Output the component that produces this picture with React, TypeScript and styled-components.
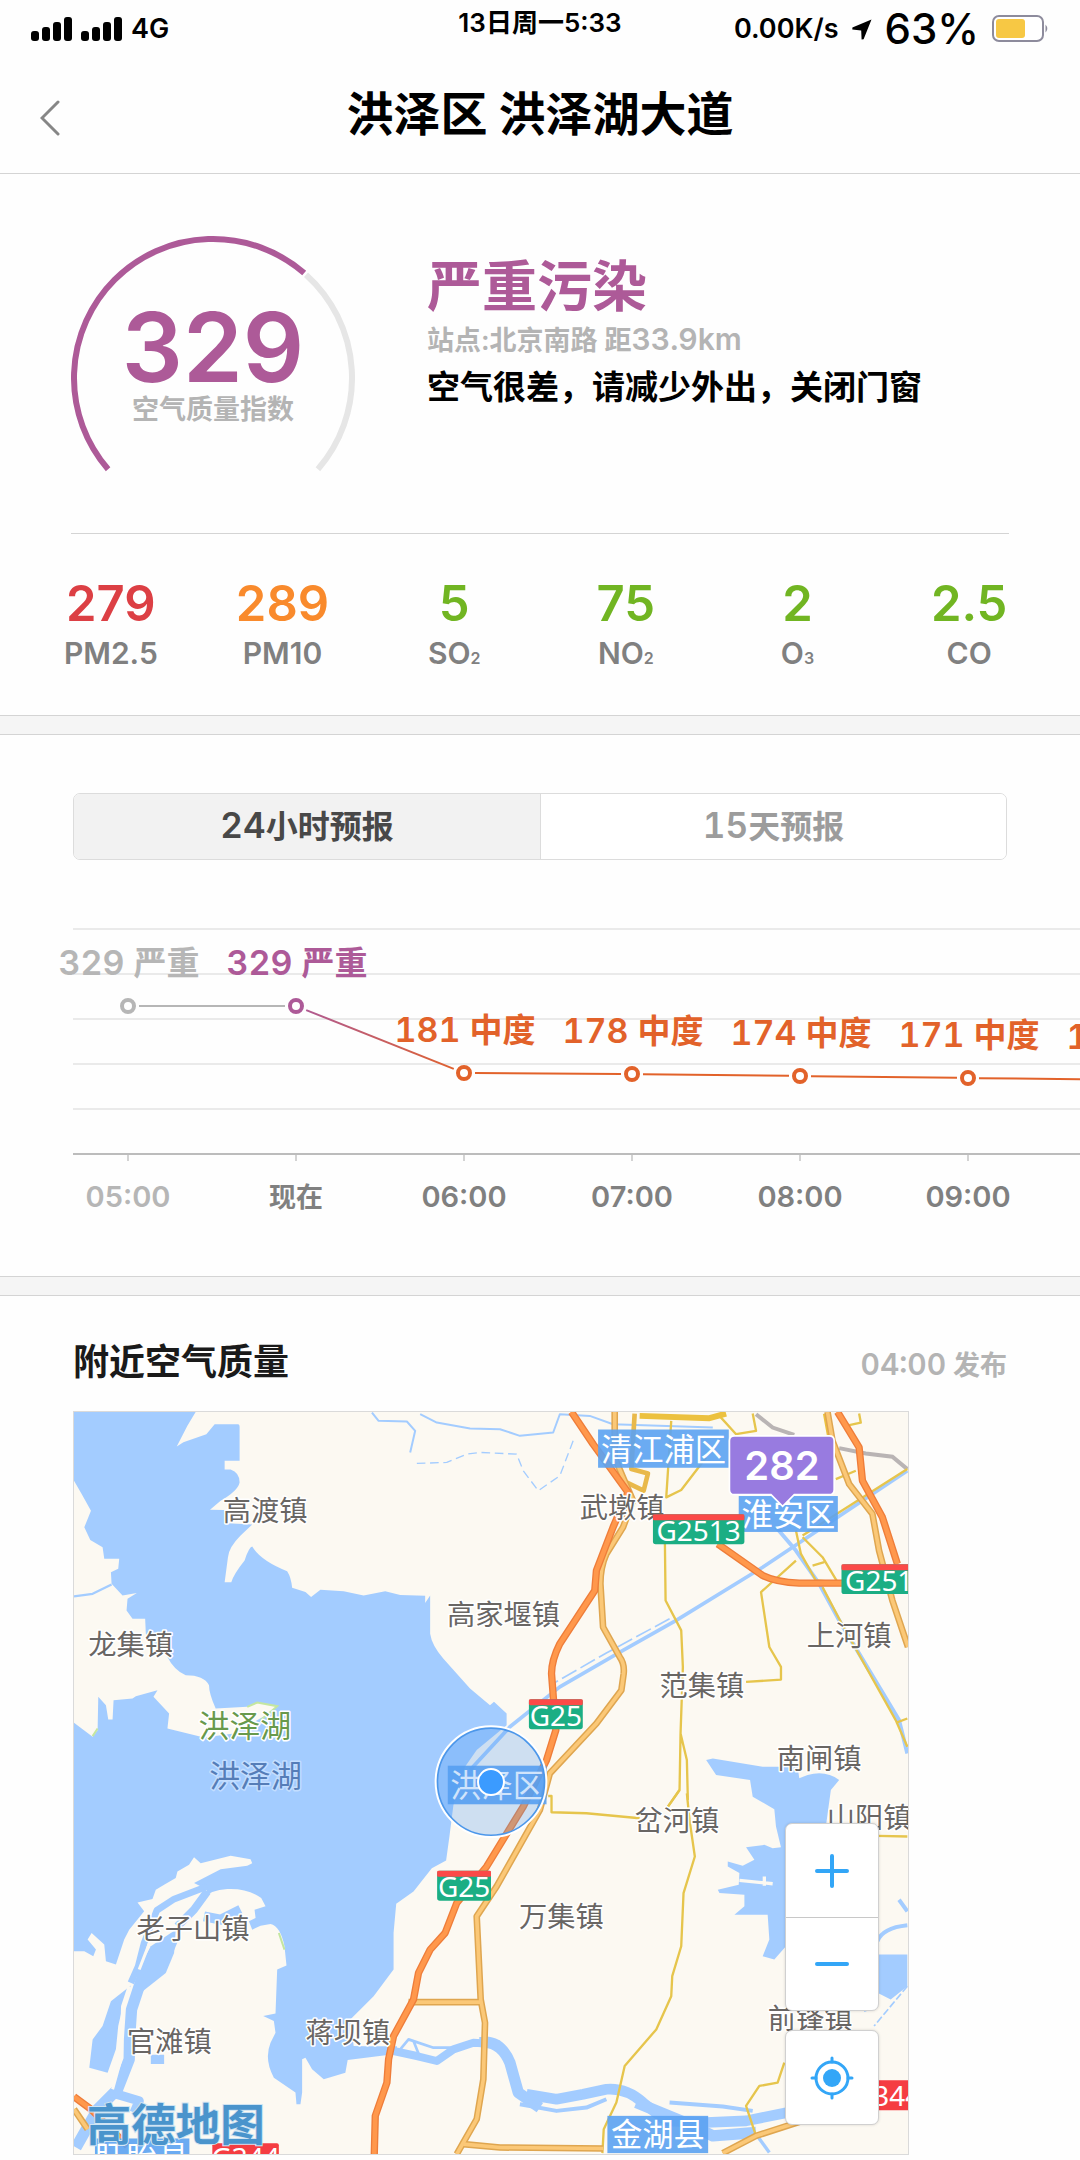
import React, { useState } from "react";
import styled, { createGlobalStyle } from "styled-components";

const FONT = `Inter, "Noto Sans CJK SC", sans-serif`;
const MAP_FONT = `"Noto Sans", "Noto Sans CJK SC", sans-serif`;

const color = {
  purple: "#ad5a98",
  red: "#dc3f44",
  amber: "#f98a2c",
  green: "#71b522",
  orange: "#e2622a",
  line: "#d4d4d4",
  muted: "#b4b4b4",
  label: "#808080",
  water: "#a3ccff",
  land: "#fcf9f2",
  road: "#e6c54c",
  sky: "#33a6f7",
};

const GlobalStyle = createGlobalStyle`
  *, *::before, *::after { box-sizing: border-box; }
  body { margin: 0; background: #fefefe; color: #000; font-family: ${FONT}; }
  button { font: inherit; padding: 0; border: 0; background: none; cursor: pointer; }
  h1, h2, p, dl, dd { margin: 0; }
`;

const Page = styled.div`
  overflow: hidden;
  padding-bottom: 5px;
`;

const StatusBar = styled.div`
  display: grid;
  grid-template-columns: 1fr auto 1fr;
  align-items: center;
  height: 58px;
  padding: 0 31px;
  font-size: 27px;
  line-height: 32px;
  font-weight: 600;
`;

const StatusGroup = styled.div<{ $end?: boolean }>`
  display: flex;
  align-items: center;
  justify-content: ${(p) => (p.$end ? "flex-end" : "flex-start")};
  gap: ${(p) => (p.$end ? 13 : 9)}px;
`;

const StatusTime = styled.time`
  align-self: start;
  padding-top: 7px;
  font-size: 26px;
`;

const BatteryLevel = styled.span`
  font-size: 42px;
  font-weight: 500;
`;

const Header = styled.header`
  display: grid;
  grid-template-columns: 100px 1fr 100px;
  align-items: center;
  height: 116px;
  padding-bottom: 3px;
  border-bottom: 1px solid ${color.line};
`;

const BackButton = styled.button`
  display: flex;
  align-items: center;
  height: 100%;
  padding: 8px 0 0 40px;
`;

const Title = styled.h1`
  text-align: center;
  font-size: 47px;
  line-height: 56px;
  font-weight: 700;
`;

const Hero = styled.section`
  display: flex;
  gap: 72px;
  margin: 0 71px;
  padding: 61px 0;
  border-bottom: 1px solid ${color.line};
`;

const Gauge = styled.div`
  position: relative;
  flex: none;
  width: 284px;
  height: 237px;
`;

const GaugeText = styled.div`
  position: absolute;
  inset: 0;
  padding-top: 63px;
  text-align: center;
`;

const GaugeValue = styled.div`
  font-size: 96px;
  line-height: 98px;
  font-weight: 600;
  color: ${color.purple};
`;

const GaugeCaption = styled.div`
  font-size: 27px;
  line-height: 28px;
  font-weight: 600;
  color: ${color.muted};
`;

const Info = styled.div`
  padding-top: 21px;
`;

const Level = styled.h2`
  font-size: 55px;
  line-height: 60px;
  font-weight: 700;
  color: ${color.purple};
`;

const Station = styled.p`
  font-size: 27px;
  line-height: 50px;
  font-weight: 600;
  color: ${color.muted};
`;

const Figures = styled.span<{ $size: number }>`
  font-size: ${(p) => p.$size}px;
  line-height: 32px;
  font-variant-numeric: tabular-nums;
`;

const Advice = styled.p`
  font-size: 33px;
  line-height: 42px;
  font-weight: 700;
`;

const Pollutants = styled.dl`
  display: grid;
  grid-template-columns: repeat(6, 1fr);
  padding: 40px 25px 43px;
  text-align: center;
`;

const Pollutant = styled.div`
  display: flex;
  flex-direction: column-reverse;
`;

const PollutantName = styled.dt`
  font-size: 30px;
  line-height: 38px;
  font-weight: 600;
  color: ${color.label};

  sub {
    font-size: 16px;
    line-height: 16px;
    vertical-align: baseline;
  }
`;

const PollutantValue = styled.dd<{ $color: string }>`
  font-size: 49px;
  line-height: 60px;
  font-weight: 600;
  color: ${(p) => p.$color};
`;

const Band = styled.div`
  height: 20px;
  background: #f5f5f5;
  border-top: 1px solid ${color.line};
  border-bottom: 1px solid ${color.line};
`;

const Tabs = styled.div`
  display: grid;
  grid-template-columns: 1fr 1fr;
  height: 67px;
  margin: 58px 73px 0;
  border: 1px solid #dcdcdc;
  border-radius: 7px;
  overflow: hidden;
`;

const Tab = styled.button<{ $active: boolean }>`
  padding-bottom: 6px;
  font-size: 32px;
  font-weight: 600;
  color: ${(p) => (p.$active ? "#484848" : "#9c9c9c")};
  background: ${(p) => (p.$active ? "#f2f2f2" : "#fff")};

  & + & {
    border-left: 1px solid #dcdcdc;
  }
`;

const ChartScroller = styled.div`
  height: 416px;
  overflow: hidden;

  svg {
    display: block;
  }
`;

const ChartValue = styled.text`
  font-variant-numeric: tabular-nums;
`;

const Nearby = styled.section`
  padding: 36px 73px 0;
`;

const NearbyHead = styled.div`
  display: flex;
  align-items: baseline;
  justify-content: space-between;
  margin-bottom: 15px;
  line-height: 60px;
`;

const NearbyTitle = styled.h2`
  font-size: 36px;
  font-weight: 700;
  color: #1a1a1a;
`;

const Published = styled.span`
  font-size: 27px;
  font-weight: 600;
  color: ${color.muted};
`;

const MapBox = styled.div`
  position: relative;
  width: 100%;
  max-width: 836px;
  height: 744px;
  border: 1px solid #dadada;

  > svg {
    display: block;
    width: 100%;
    height: 100%;
  }
`;

const MapControls = styled.div`
  position: absolute;
  right: 29px;
  bottom: 29px;
  display: grid;
  gap: 19px;
`;

const ControlGroup = styled.div`
  display: grid;
  background: #fff;
  border: 1px solid #d0d0d0;
  border-radius: 7px;
  box-shadow: 0 0 3px rgba(0, 0, 0, 0.15);
`;

const ControlButton = styled.button`
  display: grid;
  place-items: center;
  width: 92px;
  height: 93px;

  & + & {
    border-top: 1px solid #c8c8c8;
  }
`;

function SignalBars() {
  return (
    <svg width="41" height="25" viewBox="0 0 41 25" aria-hidden="true">
      <rect x="0" y="14" width="8" height="10" rx="3" />
      <rect x="11" y="10" width="8" height="14" rx="3" />
      <rect x="22" y="5" width="8" height="19" rx="3" />
      <rect x="33" y="0" width="8" height="24" rx="3" />
    </svg>
  );
}

function LocationArrow() {
  return (
    <svg width="20" height="21" viewBox="0 0 20 21" aria-hidden="true">
      <path d="M19.5 .5 11.6 20.2 9.6 20.4 9.2 11.4 .3 10.4 .4 8.6Z" />
    </svg>
  );
}

function Battery() {
  return (
    <svg width="57" height="28" viewBox="0 0 57 28" aria-hidden="true">
      <rect x="1" y="1" width="50" height="25" rx="6" fill="#fff" stroke="#8d8b9c" strokeWidth="2" />
      <rect x="4" y="4" width="29" height="19" rx="3" fill="#f7c844" />
      <path d="M53.5 9.500 Q57 13.500 53.500 17.500Z" fill="#8d8b9c" />
    </svg>
  );
}

function GaugeArc() {
  const cx = 142;
  const cy = 143;
  const r = 139;
  const at = (deg: number) => {
    const a = (deg * Math.PI) / 180;
    return `${cx + r * Math.cos(a)} ${cy + r * Math.sin(a)}`;
  };
  return (
    <svg width="284" height="237" viewBox="0 0 284 237" fill="none" strokeWidth="6" aria-hidden="true">
      <path d={`M${at(139)} A${r} ${r} 0 0 1 ${at(311)}`} stroke={color.purple} />
      <path d={`M${at(312)} A${r} ${r} 0 0 1 ${at(401)}`} stroke="#e6e6e6" />
    </svg>
  );
}

const pollutants = [
  { name: "PM2.5", value: "279", tint: color.red },
  { name: "PM10", value: "289", tint: color.amber },
  { name: "SO", sub: "2", value: "5", tint: color.green },
  { name: "NO", sub: "2", value: "75", tint: color.green },
  { name: "O", sub: "3", value: "2", tint: color.green },
  { name: "CO", value: "2.5", tint: color.green },
];

const hours = [
  { time: "05:00", aqi: 329, level: "严重", y: 146, tint: "#b6b6b6", past: true },
  { time: "现在", aqi: 329, level: "严重", y: 146, tint: color.purple },
  { time: "06:00", aqi: 181, level: "中度", y: 213, tint: color.orange },
  { time: "07:00", aqi: 178, level: "中度", y: 214, tint: color.orange },
  { time: "08:00", aqi: 174, level: "中度", y: 216, tint: color.orange },
  { time: "09:00", aqi: 171, level: "中度", y: 218, tint: color.orange },
  { time: "10:00", aqi: 168, level: "中度", y: 220, tint: color.orange },
];

function HourlyChart() {
  const x = (i: number) => 128 + i * 168;
  const gap = 11;
  return (
    <svg width="1240" height="416" viewBox="0 0 1240 416" fontFamily={FONT} textAnchor="middle">
      <defs>
        <linearGradient id="drop" gradientUnits="userSpaceOnUse" x1={x(1)} y1="0" x2={x(2)} y2="0">
          <stop offset="0" stopColor={color.purple} />
          <stop offset="1" stopColor={color.orange} />
        </linearGradient>
      </defs>
      {[69, 114, 159, 204, 249].map((y) => (
        <path key={y} d={`M73 ${y}H1240`} stroke="#eaeaea" strokeWidth="2" />
      ))}
      <path d="M73 294H1240" stroke="#bcbcbc" strokeWidth="2" />
      {hours.slice(1).map((h, n) => {
        const from = hours[n];
        const dx = 168;
        const dy = h.y - from.y;
        const len = Math.hypot(dx, dy);
        const ux = (dx / len) * gap;
        const uy = (dy / len) * gap;
        return (
          <path
            key={h.time}
            d={`M${x(n) + ux} ${from.y + uy}L${x(n + 1) - ux} ${h.y - uy}`}
            stroke={n === 0 ? "#b6b6b6" : n === 1 ? "url(#drop)" : color.orange}
            strokeWidth="2"
          />
        );
      })}
      {hours.map((h, i) => (
        <g key={h.time}>
          <path d={`M${x(i)} 295V301`} stroke="#a8a8a8" />
          <circle cx={x(i)} cy={h.y} r="6" fill="#fff" stroke={h.tint} strokeWidth="4" />
          <ChartValue x={x(i) + 1} y={h.y - 31} fontSize="33" fontWeight="600" fill={h.tint}>
            <tspan fontSize="34">{h.aqi}</tspan> {h.level}
          </ChartValue>
          <text
            x={x(i)}
            y="347"
            fontSize={h.time === "现在" ? 27 : 29}
            fontWeight="600"
            fill={h.past ? "#b6b6b6" : color.label}
          >
            {h.time}
          </text>
        </g>
      ))}
    </svg>
  );
}

type Point = { text: string; x: number; y: number };

const towns: Point[] = [
  { text: "高渡镇", x: 614, y: 627 },
  { text: "龙集镇", x: 209, y: 1030 },
  { text: "高家堰镇", x: 1331, y: 942 },
  { text: "武墩镇", x: 1687, y: 618 },
  { text: "范集镇", x: 1927, y: 1155 },
  { text: "上河镇", x: 2370, y: 1004 },
  { text: "南闸镇", x: 2280, y: 1374 },
  { text: "岔河镇", x: 1852, y: 1560 },
  { text: "万集镇", x: 1505, y: 1848 },
  { text: "山阳镇", x: 2430, y: 1550 },
  { text: "前锋镇", x: 2253, y: 2156 },
  { text: "老子山镇", x: 397, y: 1884 },
  { text: "官滩镇", x: 326, y: 2226 },
  { text: "蒋坝镇", x: 863, y: 2198 },
];

const districts = [
  { text: "清江浦区", x: 1615, y: 386, w: 393, h: 115 },
  { text: "淮安区", x: 2038, y: 586, w: 298, h: 108 },
  { text: "洪泽区", x: 1163, y: 1397, w: 297, h: 116 },
  { text: "金湖县", x: 1643, y: 2450, w: 303, h: 112 },
  { text: "盱眙县", x: 102, y: 2518, w: 284, h: 112 },
];

const shields = [
  { text: "G2513", x: 1780, y: 641, w: 275 },
  { text: "G2513", x: 2347, y: 791, w: 275 },
  { text: "G25", x: 1407, y: 1197, w: 162 },
  { text: "G25", x: 1131, y: 1713, w: 162 },
];

const nationalRoads = [
  { text: "G344", x: 455, y: 2532, w: 200 },
  { text: "G344", x: 2384, y: 2343, w: 200 },
];

const lake =
  "M39 333H405L380 375 348 437 368 424 437 400 462 370H533Q537 370 537 378V480H492V506H510Q537 515 537 545 532 570 480 600L448 627 490 628 500 668 575 672 540 705Q505 740 502 770L492 845H512Q520 820 552 780 565 740 575 738 600 780 680 812 692 830 695 862L735 875 752 890 780 868 850 872 910 885 975 872 1020 884 1095 886 1095 908 1110 885V1000Q1115 1035 1150 1075L1230 1165 1290 1215 1302 1205 1340 1240V1275L1250 1350 1215 1400 1180 1515 1168 1610 1158 1682 1115 1705 1060 1775 1008 1812 1000 1900V2010L940 2090 870 2160 880 2240 1000 2250V2265L862 2282 855 2320 790 2340 755 2310 735 2275 725 2280V2380L720 2415H708L705 2380 640 2335Q610 2280 630 2230L645 2200 640 2165 608 2150 645 2142 650 2010 678 1998 672 1940Q660 1880 630 1873L600 1878 575 1890 565 1865 585 1855 582 1830 615 1820 602 1795Q560 1765 500 1768 450 1770 420 1800L395 1820 440 1770 400 1750 480 1708 560 1698 575 1690 570 1678 510 1668 420 1690 400 1672 385 1695 350 1715 345 1735 310 1755 285 1770 275 1798 230 1808 250 1835 205 1890 190 1920 165 1995 135 1985 130 1935 92 1900 80 1920 105 1950 97 1970 70 1955H39Z";

const westShore =
  "M39 540 62 580 90 630 70 680 88 718 125 740 130 775H175L172 805 150 815 152 850 185 885 228 878 200 895 197 930 215 955H253L255 1000 320 1070Q340 1110 375 1125 430 1125 445 1155 445 1180 465 1225L560 1220 590 1207 650 1218 625 1240 520 1300 430 1312 320 1285 325 1240 278 1190 290 1170 225 1188 215 1195 158 1200 155 1258H142L135 1215 112 1190 110 1290 95 1310 39 1268Z";

function RegionMap() {
  return (
    <svg viewBox="39 333 2508 2232" preserveAspectRatio="xMidYMid slice" role="img" aria-label="附近空气质量地图" fontFamily={MAP_FONT}>
      <rect x="39" y="333" width="2508" height="2232" fill={color.land} />

      <path d={lake} fill={color.water} />
      <path d={westShore} fill={color.land} />
      <path d="M560 1220 590 1207 650 1218 600 1260M95 1308 110 1285M655 1900 672 1950" fill="none" stroke="#c4e6a0" strokeWidth="6" />

      <g transform="translate(0 1320)" fill="none" stroke={color.water} strokeLinejoin="round">
        <path d="M440 440 340 478 288 512 250 610 232 680 210 730" strokeWidth="20" />
        <path d="M440 455 400 510 350 560" strokeWidth="24" />
        <path d="M335 600 310 660 240 725 212 810 206 900 205 960 170 1050 110 1110 45 1225" strokeWidth="34" />
        <path d="M345 570 340 640 315 700 240 760 225 700 270 620Z" fill={color.water} stroke="none" />
        <path d="M210 738 150 785 125 860 95 900 85 985 140 1000 165 930 172 860 188 790Z" fill={color.water} stroke="none" />
        <path d="M270 960H310M150 1060 235 1085 220 1120" strokeWidth="28" />
        <path d="M540 510 480 540 430 530" strokeWidth="30" />
        <path d="M850 930H1010" strokeWidth="18" />
        <path d="M1000 935 1070 950 1130 965 1180 930 1240 910 1320 915" strokeWidth="24" />
        <path d="M1020 930 1045 900 1120 925 1190 925M1060 905 1080 955" strokeWidth="8" />
        <path d="M355 500 270 600 235 690M205 740 185 800 180 960 155 1050" stroke={color.land} strokeWidth="9" />
      </g>
      <g transform="translate(1260 1380)" fill="none" stroke={color.water} strokeLinejoin="round">
        <path d="M0 850Q60 840 90 910L115 1000 180 1045" strokeWidth="34" />
        <path d="M140 1005 230 1020 310 1005 380 990Q440 985 490 1030L560 1085 680 1090 800 1085 925 1060" strokeWidth="32" />
        <path d="M470 1030 640 1100 700 1130 830 1120" strokeWidth="34" />
        <path d="M120 1035 230 1055 320 1045 380 1020M570 1030 730 1042 820 1055" strokeWidth="12" />
        <path d="M830 1125 870 1180" strokeWidth="10" />
        <path
          fill={color.water}
          stroke="none"
          d="M680 0 710 45 812 60 820 110 885 148 890 200 905 262 880 265 855 255 800 262 825 300 790 318 745 305 745 320 780 340 778 375 715 390 720 400 795 405 795 440 765 465H865L870 540 850 590 885 600 920 560H1040V200L1055 90 1080 60Q1040 30 985 45L960 55 955 20 850 20 700 -5ZM1195 585H1285V680L1235 720 1195 700Z"
        />
        <path d="M780 362 880 372M855 350V378" stroke={color.land} strokeWidth="10" />
        <path d="M1195 545Q1210 505 1285 497M1260 420 1285 455" strokeWidth="12" />
        <path d="M1285 680 1185 800M1195 740 1155 755" strokeWidth="5" strokeDasharray="22 8" />
      </g>

      <g fill="none" stroke={color.water} strokeWidth="7" strokeLinejoin="round">
        <path d="M935 335 955 360 1040 362 1065 390 1050 455M1080 340 1130 365 1230 383 1320 385 1380 405 1480 395 1500 340 1590 345 1660 370 1960 380" strokeWidth="6" />
        <path d="M1540 420 1500 525 1435 570 1390 510 1370 460 1260 455 1220 460 1160 485 1070 488" strokeWidth="4" strokeDasharray="26 14" />
        <path d="M39 888 95 880 152 852" />
        <path d="M2545 510 2200 740 2110 800 1850 960 1690 1050 1500 1160 1350 1280 1230 1410" strokeWidth="11" />
        <path d="M1830 955 1640 1058 1480 1150" strokeWidth="5" strokeDasharray="50 14" />
        <path d="M2150 680 2210 750 2280 850 2340 960 2460 1160 2520 1260 2545 1360" strokeWidth="12" />
      </g>

      <g fill="none" stroke="#b9b4b4" strokeWidth="12" transform="translate(1260 300)">
        <path d="M830 40 880 80 945 102M1080 142 1160 158 1240 168 1285 205" />
      </g>

      <g fill="none" stroke={color.road} strokeWidth="7" strokeLinejoin="round">
        <g transform="translate(1260 300)">
          <path d="M575 60 560 290 605 268 680 170M556 430 558 600 605 690 610 800 603 1000 600 1170 565 1220M603 1000 622 1080 625 1200" />
          <path d="M950 480 845 575 870 740 905 800V838L800 845M720 45 770 100 830 90 820 38M1285 205 970 405" />
          <path d="M950 390 965 460 1010 540 1075 545 1030 470 970 410M1000 495 1035 485M1030 560 1085 665 1250 960 1285 1040M1250 968 1285 955M1070 235 1130 210M1100 75 1145 65 1140 38" />
          <path d="M465 38 455 205 505 218 492 270 420 235" strokeWidth="14" stroke="#e9b94a" />
          <path d="M480 45 690 52 740 38M1040 38 1055 120" strokeWidth="18" stroke="#ecc13f" />
        </g>
        <g transform="translate(1260 1380)">
          <path d="M600 90 565 140M622 100 630 180 646 290 612 400 605 560 578 650 575 710 530 810 435 920 410 1030 372 1110 368 1182" />
          <path d="M205 108H215V157L320 160 480 175M915 910 895 970 840 980 800 1040 830 1130M1195 228 1285 230" />
        </g>
      </g>

      {[
        { stroke: "#dfa650", width: 20 },
        { stroke: "#fbc877", width: 11 },
      ].map((s) => (
        <g key={s.stroke} fill="none" stroke={s.stroke} strokeWidth={s.width} strokeLinejoin="round">
          <path d="M1665 333V470L1690 530 1720 600 1690 680 1640 760Q1622 800 1622 850L1630 980 1680 1070Q1695 1090 1692 1120L1685 1170 1610 1270 1470 1420 1440 1530 1310 1760 1250 1850 1262 2100 1275 2170 1270 2340 1250 2460 1210 2530 1190 2565" />
          <path d="M1045 2108H1262M1210 2535 1320 2545 1630 2548M1990 2562 2090 2510 2230 2465" />
          <path d="M2305 333 2320 420 2370 550 2440 640 2460 750 2500 900 2547 1040M39 2430 80 2490" />
        </g>
      ))}
      {[
        { stroke: "#ee7d3a", width: 22 },
        { stroke: "#ff984c", width: 14 },
      ].map((s) => (
        <g key={s.stroke} fill="none" stroke={s.stroke} strokeWidth={s.width} strokeLinejoin="round">
          <path d="M1535 333 1600 430 1705 575 1660 680 1610 810 1605 870 1500 1030Q1475 1080 1475 1120L1488 1290 1460 1380 1390 1520 1280 1700 1190 1810 1155 1900 1110 1950 1075 2020 1060 2100 1000 2210 985 2280 980 2350 945 2450 942 2565" />
          <path d="M1975 730 2110 825Q2150 845 2220 848H2350M2335 333 2400 440 2410 540 2470 650 2515 790M39 2392 90 2430 200 2540" />
        </g>
      ))}

      <g textAnchor="middle" dominantBaseline="central" fontSize="85" stroke="#fff" strokeWidth="9" strokeLinejoin="round" paintOrder="stroke" fill="#696664">
        {towns.map((t) => (
          <text key={t.text} x={t.x} y={t.y}>{t.text}</text>
        ))}
        <text x="553" y="1276" fontSize="93" fill="#68994c">洪泽湖</text>
        <text x="585" y="1425" fontSize="93" fill="#557db8" stroke="#c3deff">洪泽湖</text>
      </g>

      {districts.map((d) => (
        <g key={d.text}>
          <rect x={d.x} y={d.y} width={d.w} height={d.h} fill="#5ba2f2" fillOpacity=".9" />
          <text x={d.x + d.w / 2} y={d.y + d.h / 2} fontSize="94" fill="#fff" textAnchor="middle" dominantBaseline="central">{d.text}</text>
        </g>
      ))}

      {shields.map((s) => (
        <g key={`${s.x}`}>
          <rect x={s.x} y={s.y} width={s.w} height="90" rx="8" fill="#1bae84" />
          <rect x={s.x} y={s.y} width={s.w} height="18" rx="4" fill="#fb4a48" />
          <text x={s.x + s.w / 2} y={s.y + 80} fontSize="84" fill="#fff" textAnchor="middle">{s.text}</text>
        </g>
      ))}
      {nationalRoads.map((s) => (
        <g key={`${s.x}`}>
          <rect x={s.x} y={s.y} width={s.w} height="90" rx="6" fill="#f53d42" />
          <text x={s.x + s.w / 2} y={s.y + 76} fontSize="84" fill="#fff" textAnchor="middle">{s.text}</text>
        </g>
      ))}

      <circle cx="1293" cy="1445" r="165" fill="#4a97ee" fillOpacity=".26" stroke="#fff" strokeWidth="9" />
      <circle cx="1293" cy="1445" r="161" fill="none" stroke="#4c97ea" strokeWidth="5" />
      <circle cx="1293" cy="1446" r="39" fill="#3b9bff" stroke="#fff" strokeWidth="6" />

      <path
        d="M2025 405H2310Q2325 405 2325 420V567Q2325 582 2310 582H2205L2170 617 2135 582H2025Q2010 582 2010 567V420Q2010 405 2025 405Z"
        fill="#987be0"
        stroke="#fff"
        strokeWidth="5"
      />
      <text x="2168" y="538" fontSize="120" fontWeight="600" fontFamily={FONT} fill="#fff" textAnchor="middle">282</text>

      <text x="345" y="2474" fontSize="134" fontWeight="700" fill="#4a94cc" stroke="#cfe4f3" strokeWidth="6" paintOrder="stroke" textAnchor="middle" dominantBaseline="central">
        高德地图
      </text>
    </svg>
  );
}

const tabs = [
  { figure: "24", text: "小时预报" },
  { figure: "15", text: "天预报" },
];

export default function App() {
  const [active, setActive] = useState(0);
  return (
    <Page>
      <GlobalStyle />
      <StatusBar>
        <StatusGroup>
          <SignalBars />
          <SignalBars />
          <span>4G</span>
        </StatusGroup>
        <StatusTime>13日周一5:33</StatusTime>
        <StatusGroup $end>
          <span>0.00K/s</span>
          <LocationArrow />
          <BatteryLevel>63%</BatteryLevel>
          <Battery />
        </StatusGroup>
      </StatusBar>

      <Header>
        <BackButton type="button" aria-label="返回">
          <svg width="20" height="36" viewBox="0 0 20 36" fill="none" stroke="#868686" strokeWidth="3" strokeLinecap="round">
            <path d="M18 2 2 18 18 34" />
          </svg>
        </BackButton>
        <Title>洪泽区 洪泽湖大道</Title>
      </Header>

      <main>
        <Hero>
          <Gauge>
            <GaugeArc />
            <GaugeText>
              <GaugeValue>329</GaugeValue>
              <GaugeCaption>空气质量指数</GaugeCaption>
            </GaugeText>
          </Gauge>
          <Info>
            <Level>严重污染</Level>
            <Station>
              站点:北京南路 距<Figures $size={30}>33.9km</Figures>
            </Station>
            <Advice>空气很差，请减少外出，关闭门窗</Advice>
          </Info>
        </Hero>

        <Pollutants>
          {pollutants.map((p) => (
            <Pollutant key={p.name}>
              <PollutantName>
                {p.name}
                {p.sub && <sub>{p.sub}</sub>}
              </PollutantName>
              <PollutantValue $color={p.tint}>{p.value}</PollutantValue>
            </Pollutant>
          ))}
        </Pollutants>

        <Band />

        <section>
          <Tabs role="tablist">
            {tabs.map((t, i) => (
              <Tab key={t.text} type="button" role="tab" aria-selected={i === active} $active={i === active} onClick={() => setActive(i)}>
                <Figures $size={35}>{t.figure}</Figures>
                {t.text}
              </Tab>
            ))}
          </Tabs>
          <ChartScroller>
            <HourlyChart />
          </ChartScroller>
        </section>

        <Band />

        <Nearby>
          <NearbyHead>
            <NearbyTitle>附近空气质量</NearbyTitle>
            <Published>
              <Figures $size={30}>04:00</Figures> 发布
            </Published>
          </NearbyHead>
          <MapBox>
            <RegionMap />
            <MapControls>
              <ControlGroup>
                <ControlButton type="button" aria-label="放大">
                  <svg width="34" height="34" viewBox="0 0 34 34" stroke={color.sky} strokeWidth="4" strokeLinecap="round">
                    <path d="M2 17H32M17 2V32" />
                  </svg>
                </ControlButton>
                <ControlButton type="button" aria-label="缩小">
                  <svg width="34" height="34" viewBox="0 0 34 34" stroke={color.sky} strokeWidth="4" strokeLinecap="round">
                    <path d="M2 17H32" />
                  </svg>
                </ControlButton>
              </ControlGroup>
              <ControlGroup>
                <ControlButton type="button" aria-label="定位">
                  <svg width="44" height="44" viewBox="0 0 44 44" fill="none" stroke={color.sky} strokeWidth="3" strokeLinecap="round">
                    <circle cx="22" cy="22" r="16" />
                    <circle cx="22" cy="22" r="9" fill={color.sky} stroke="none" />
                    <path d="M22 2V6M22 38V42M2 22H6M38 22H42" />
                  </svg>
                </ControlButton>
              </ControlGroup>
            </MapControls>
          </MapBox>
        </Nearby>
      </main>
    </Page>
  );
}
